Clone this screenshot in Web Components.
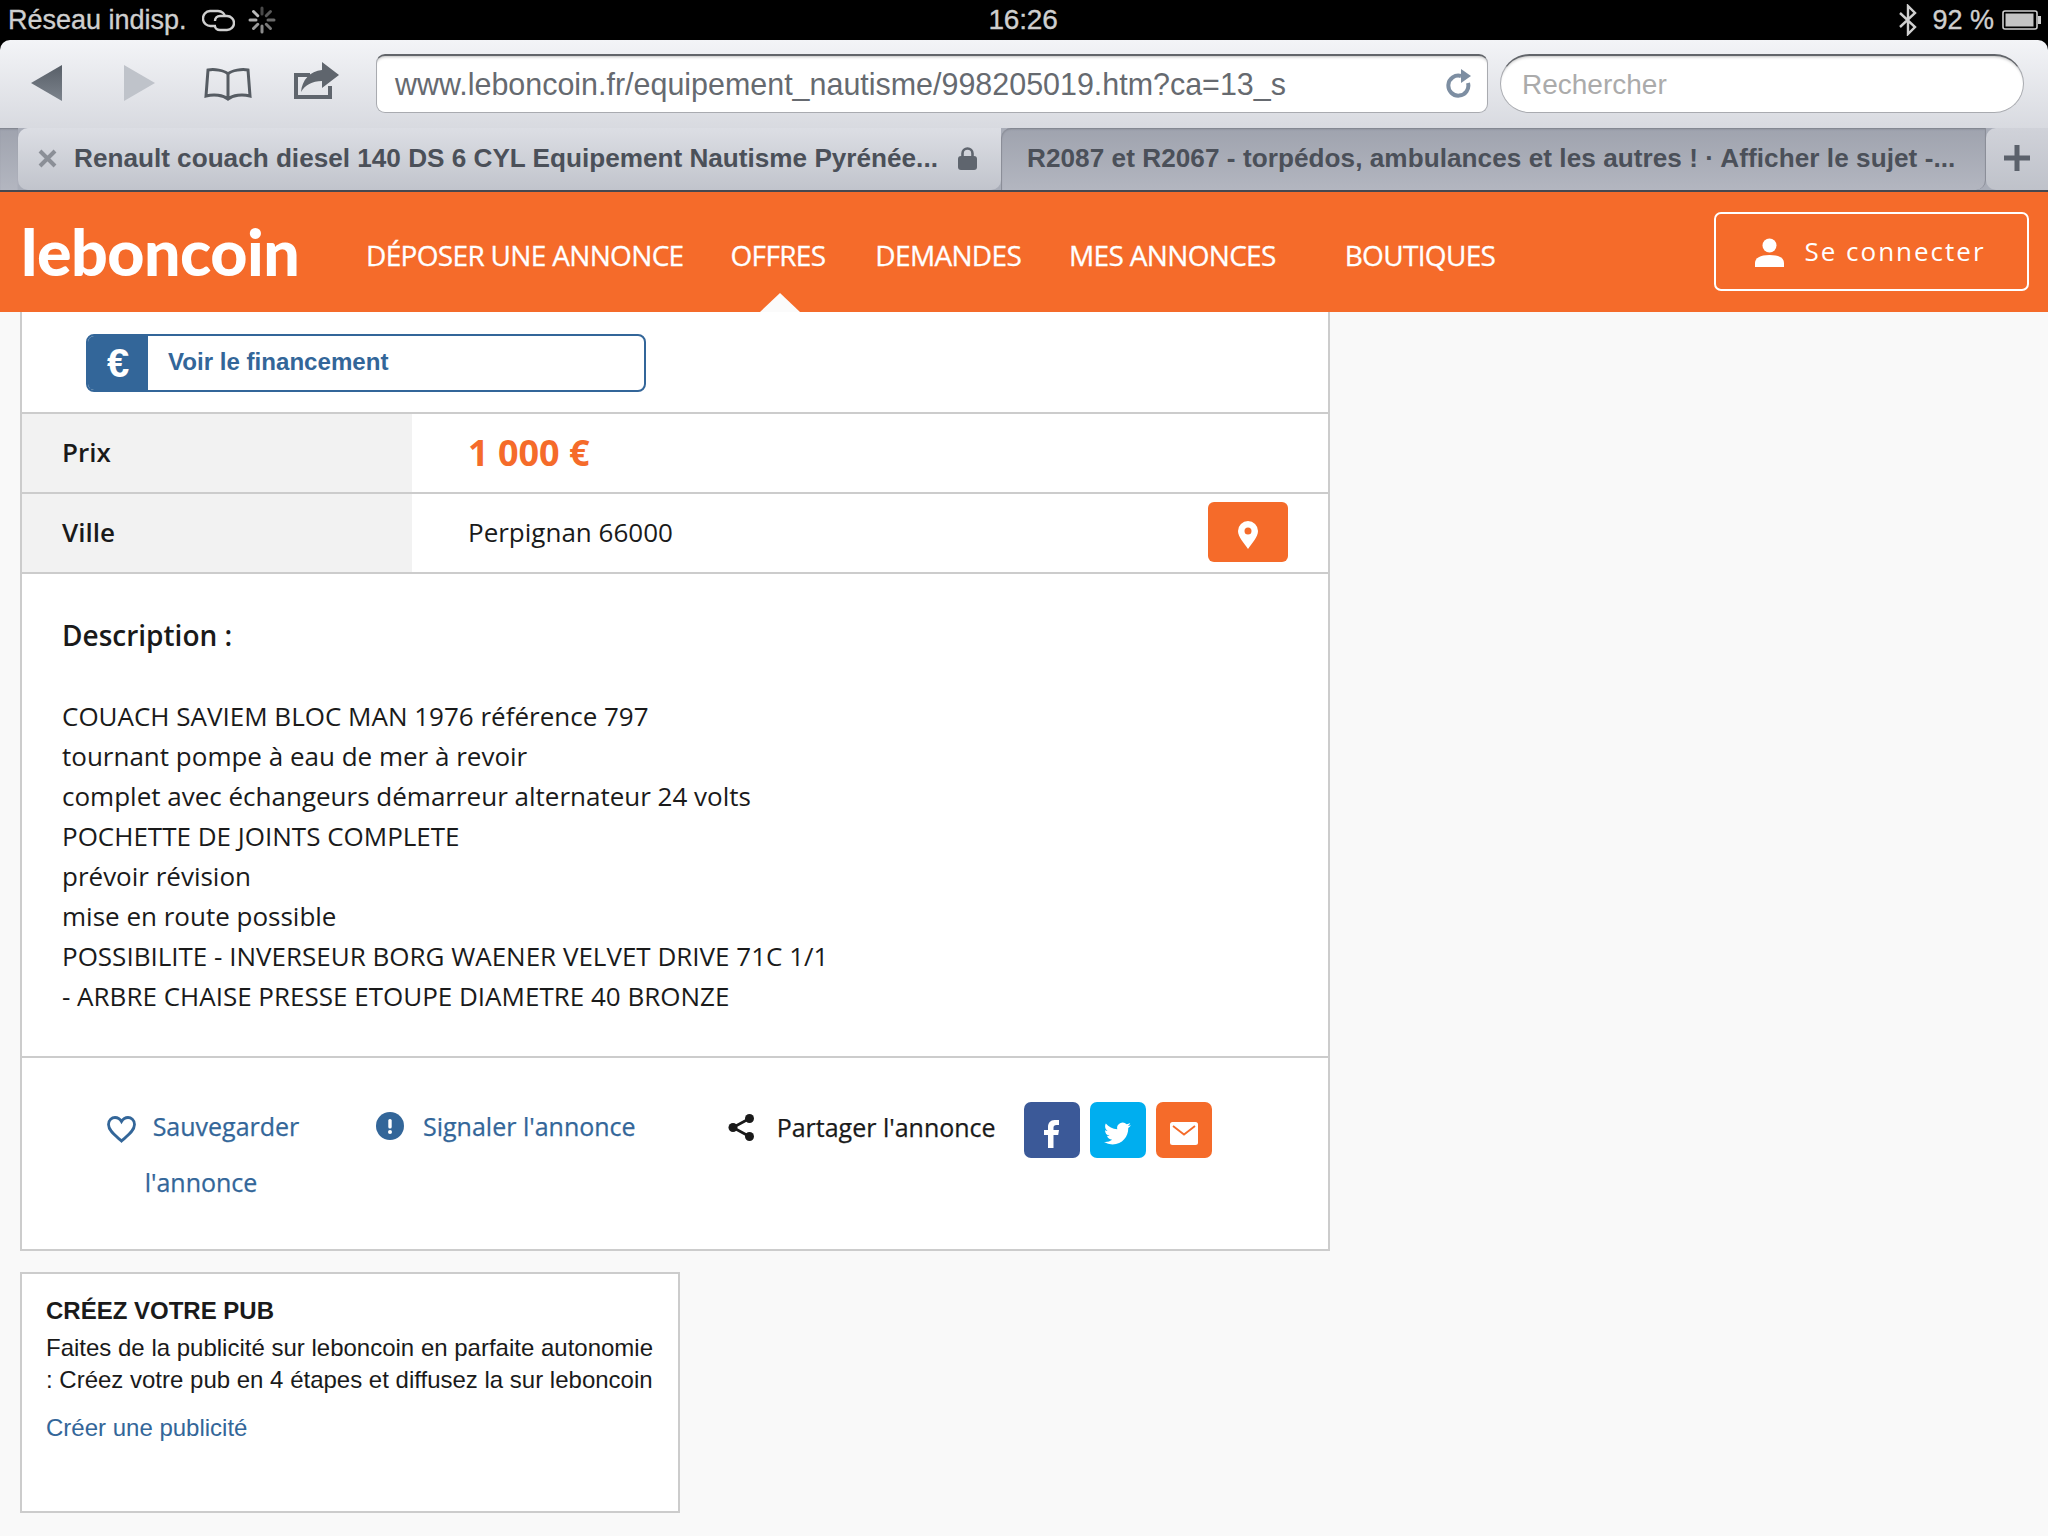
<!DOCTYPE html>
<html lang="fr">
<head>
<meta charset="utf-8">
<title>leboncoin</title>
<style>
  html, body { margin: 0; padding: 0; background: #f9f9f9; }
  body { width: 2048px; height: 1536px; overflow: hidden; font-family: "Open Sans", sans-serif; }
</style>
</head>
<body>
<ios-status-bar></ios-status-bar>
<safari-toolbar></safari-toolbar>
<safari-tabs></safari-tabs>
<lbc-header></lbc-header>
<ad-panel></ad-panel>
<pub-box></pub-box>

<script>
"use strict";

(function () {
  const ORANGE = "#f56b2a";

  class IosStatusBar extends HTMLElement {
    constructor() {
      super();
      const shadow = this.attachShadow({ mode: "open" });
      let rays = "";
      for (let i = 0; i < 8; i++) {
        rays += `<line x1="14" y1="2" x2="14" y2="8" transform="rotate(${i * 45} 14 14)" stroke-opacity="${0.35 + i * 0.08}"/>`;
      }
      shadow.innerHTML = `
        <style>
          :host {
            display: grid;
            grid-template-columns: 1fr auto 1fr;
            align-items: center;
            height: 40px;
            background: #000;
            color: #cfcfcf;
            font: 400 27px "Liberation Sans", sans-serif;
            -webkit-text-stroke: 0.35px #cfcfcf;
          }
          .left { display: flex; align-items: center; padding-left: 8px; }
          .link { margin-left: 15px; }
          .spin { margin-left: 13px; }
          .time { font-size: 28px; text-align: center; letter-spacing: -0.2px; margin-left: -2px; }
          .right { display: flex; align-items: center; justify-content: flex-end; padding-right: 6px; }
          .pct { margin: 0 8px 0 15px; }
        </style>
        <div class="left">
          <span>Réseau indisp.</span>
          <svg class="link" width="33" height="24" viewBox="0 0 33 24" fill="none" stroke="#cfcfcf" stroke-width="2.4">
            <path d="M14 18H9A7.500 7.500 0 0 1 8 3h8c4 0 7 3 7 6"/>
            <path d="M13 13c0-3 2-5 5-5h7a7 7 0 0 1 0 14h-7c-3 0-5-2-5-4"/>
          </svg>
          <svg class="spin" width="28" height="28" viewBox="0 0 28 28" stroke="#cfcfcf" stroke-width="3" stroke-linecap="round">${rays}</svg>
        </div>
        <div class="time">16:26</div>
        <div class="right">
          <svg width="18" height="32" viewBox="0 0 18 32" fill="none" stroke="#cfcfcf" stroke-width="2.4">
            <path d="M1 9l15 14-7 7V2l7 7L1 23"/>
          </svg>
          <span class="pct">92 %</span>
          <svg width="40" height="20" viewBox="0 0 40 20">
            <rect x="1" y="1" width="34" height="18" rx="2" fill="none" stroke="#cfcfcf" stroke-width="1.6"/>
            <rect x="3.5" y="3.5" width="28" height="13" fill="#c4c4c4"/>
            <rect x="36" y="6" width="3" height="8" fill="#cfcfcf"/>
          </svg>
        </div>
      `;
    }
  }

  class SafariToolbar extends HTMLElement {
    constructor() {
      super();
      const shadow = this.attachShadow({ mode: "open" });
      shadow.innerHTML = `
        <style>
          :host {
            display: flex;
            align-items: center;
            height: 88px;
            background: #000;
            font-family: "Liberation Sans", sans-serif;
          }
          .bar {
            flex: 1;
            height: 88px;
            display: flex;
            box-sizing: border-box;
            padding: 14px 23px 0 0;
            border-radius: 10px 10px 0 0;
            background: linear-gradient(#f3f4f7, #d8dae0);
          }
          .btns { display: flex; align-items: flex-start; width: 376px; flex: none; }
          .back { margin: 11px 0 0 31px; }
          .fwd { margin: 11px 0 0 62px; }
          .book { margin: 14px 0 0 49px; }
          .share { margin: 8px 0 0 40px; }
          .url, .search {
            height: 59px;
            box-sizing: border-box;
            background: #fff;
            border: 1px solid #a9abb0;
            border-top: 2px solid #62656a;
            box-shadow: inset 0 3px 3px -2px rgba(0,0,0,.25);
            display: flex;
            align-items: center;
          }
          .url {
            width: 1112px;
            border-radius: 9px;
            padding: 0 13px 0 18px;
            font-size: 30.45px;
            color: #666a70;
            justify-content: space-between;
          }
          .search {
            width: 524px;
            margin-left: 12px;
            border-radius: 30px;
            padding: 2px 0 0 21px;
            font-size: 28px;
            color: #ababab;
          }
        </style>
        <div class="bar">
          <div class="btns">
            <svg class="back" width="31" height="36" viewBox="0 0 31 36"><defs><linearGradient id="g1" x1="0" y1="0" x2="0" y2="1"><stop offset="0" stop-color="#585f68"/><stop offset="1" stop-color="#7c838c"/></linearGradient></defs><path d="M0 18L31 0v36z" fill="url(#g1)"/></svg>
            <svg class="fwd" width="31" height="36" viewBox="0 0 31 36"><path d="M31 18L0 0v36z" fill="#bfc3ca"/></svg>
            <svg class="book" width="48" height="33" viewBox="0 0 48 33" fill="none" stroke="#565c63" stroke-width="3">
              <path d="M24 6C20 2 10 1 4 2L2 28c8-2 17-1 22 3 5-4 14-5 22-3L44 2c-6-1-16 0-20 4zM24 6v25"/>
            </svg>
            <svg class="share" width="47" height="37" viewBox="0 0 47 37">
              <path d="M2 11h16v4H6v18h30v-9h4v13H2z" fill="#5f656d"/>
              <path d="M30 0l17 13-17 13v-7C20 19 13 23 9 30c1-12 9-21 21-22z" fill="#5f656d"/>
            </svg>
          </div>
          <div class="url">
            <span>www.leboncoin.fr/equipement_nautisme/998205019.htm?ca=13_s</span>
            <svg width="28" height="31" viewBox="0 0 28 31" fill="none">
              <path d="M22 14a10 10 0 1 1-7-7" stroke="#7d8ea2" stroke-width="4"/>
              <path d="M15 0l10 7-10 7z" fill="#7d8ea2"/>
            </svg>
          </div>
          <div class="search">Rechercher</div>
        </div>
      `;
    }
  }

  class SafariTab extends HTMLElement {
    constructor() {
      super();
      const shadow = this.attachShadow({ mode: "open" });
      shadow.innerHTML = `
        <style>
          :host {
            display: flex;
            align-items: center;
            box-sizing: border-box;
            height: 62px;
            font: 700 26.15px "Liberation Sans", sans-serif;
            color: #4b5059;
            white-space: nowrap;
            background: linear-gradient(#9fa3ae, #b3b6c0);
            box-shadow: inset 0 2px 2px -1px #7b7e88;
            padding-bottom: 2px;
          }
          :host([active]) {
            background: linear-gradient(#dcdee4, #c1c4cc);
            box-shadow: none;
            border-radius: 10px 0 10px 10px;
          }
        </style>
        <slot></slot>
      `;
    }
  }

  class SafariTabs extends HTMLElement {
    constructor() {
      super();
      const shadow = this.attachShadow({ mode: "open" });
      shadow.innerHTML = `
        <style>
          :host {
            display: flex;
            height: 64px;
            box-sizing: border-box;
            border-bottom: 2px solid #45484f;
            background: #a9adb8;
          }
          .edge { width: 18px; }
          .first { width: 983px; padding-left: 20px; }
          .first svg.close { margin-right: 17px; flex: none; }
          .first span { flex: 1; }
          .first svg.lock { margin-right: 24px; flex: none; }
          .second {
            width: 985px;
            padding-left: 25px;
            letter-spacing: 0.05px;
            border-radius: 10px 0 10px 0;
            border-left: 1px solid #8b8e98;
            border-right: 1px solid #8b8e98;
          }
          .plus {
            flex: 1;
            display: flex;
            align-items: center;
            justify-content: center;
            background: linear-gradient(#d0d2d9, #bfc2ca);
            border-radius: 10px 0 0 10px;
            padding-bottom: 2px;
          }
        </style>
        <safari-tab class="edge"></safari-tab>
        <safari-tab class="first" active>
          <svg class="close" width="19" height="19" viewBox="0 0 19 19" stroke="#8b8f97" stroke-width="4"><path d="M2 2l15 15M17 2L2 17"/></svg>
          <span>Renault couach diesel 140 DS 6 CYL Equipement Nautisme Pyrénée...</span>
          <svg class="lock" width="19" height="23" viewBox="0 0 19 23"><path d="M4.500 10V6.500a5 5 0 0 1 10 0V10" fill="none" stroke="#5f656e" stroke-width="2.600"/><rect y="9" width="19" height="14" rx="3" fill="#5f656e"/></svg>
        </safari-tab>
        <safari-tab class="second">R2087 et R2067 - torpédos, ambulances et les autres ! · Afficher le sujet -...</safari-tab>
        <div class="plus">
          <svg width="26" height="26" viewBox="0 0 26 26"><path d="M10.500 0h5v10.500H26v5H15.500V26h-5V15.500H0v-5h10.500z" fill="#5b616b"/></svg>
        </div>
      `;
    }
  }

  class LbcHeader extends HTMLElement {
    constructor() {
      super();
      const shadow = this.attachShadow({ mode: "open" });
      shadow.innerHTML = `
        <style>
          :host {
            display: flex;
            align-items: center;
            position: relative;
            height: 120px;
            background: ${ORANGE};
            color: #fff;
            font-family: "Open Sans", sans-serif;
          }
          .logo {
            width: 345px;
            padding-left: 21px;
            box-sizing: border-box;
            font: 900 64.5px Lato, sans-serif;
            letter-spacing: -0.5px;
            line-height: 1;
            margin-top: -2px;
            flex: none;
          }
          nav { display: flex; font-size: 28px; letter-spacing: -0.67px; padding-top: 5px; flex: none; -webkit-text-stroke: 0.3px #fff; }
          nav a { display: block; white-space: nowrap; }
          nav a:nth-child(1) { margin-left: 21px; }
          nav a:nth-child(2) { margin-left: 47px; }
          nav a:nth-child(3) { margin-left: 50px; }
          nav a:nth-child(4) { margin-left: 48px; }
          nav a:nth-child(5) { margin-left: 69px; }
          .login {
            margin-left: auto;
            margin-right: 19px;
            margin-top: -2px;
            width: 315px;
            height: 79px;
            box-sizing: border-box;
            border: 2px solid #fff;
            border-radius: 7px;
            display: flex;
            align-items: center;
            justify-content: center;
            gap: 20px;
            font-size: 26px;
            letter-spacing: 2px;
            padding-right: 2px;
          }
          .login svg { margin-top: 2px; }
          .tip {
            position: absolute;
            left: 760px;
            bottom: 0;
            width: 0;
            height: 0;
            border-left: 20px solid transparent;
            border-right: 20px solid transparent;
            border-bottom: 19px solid #fbfbfb;
          }
        </style>
        <div class="logo">leboncoin</div>
        <nav>
          <a>DÉPOSER UNE ANNONCE</a>
          <a>OFFRES</a>
          <a>DEMANDES</a>
          <a>MES ANNONCES</a>
          <a>BOUTIQUES</a>
        </nav>
        <div class="login">
          <svg width="29" height="29" viewBox="0 0 29 29" fill="#fff"><circle cx="14.500" cy="7.500" r="7"/><path d="M0 29v-4c0-5 5-8 14.500-8S29 20 29 25v4z"/></svg>
          <span>Se connecter</span>
        </div>
        <div class="tip"></div>
      `;
    }
  }

  class InfoRow extends HTMLElement {
    constructor() {
      super();
      const shadow = this.attachShadow({ mode: "open" });
      shadow.innerHTML = `
        <style>
          :host {
            display: flex;
            height: 78px;
            border-top: 2px solid #ccc;
            font-size: 26px;
            color: #1a1a1a;
          }
          .label {
            width: 390px;
            flex: none;
            box-sizing: border-box;
            padding: 0 0 3px 40px;
            background: #f2f2f2;
            font-weight: 600;
            display: flex;
            align-items: center;
          }
          .value {
            flex: 1;
            padding: 0 40px 3px 56px;
            display: flex;
            align-items: center;
            justify-content: space-between;
          }
        </style>
        <div class="label"><slot name="label"></slot></div>
        <div class="value"><slot></slot></div>
      `;
    }
  }

  class AdActions extends HTMLElement {
    constructor() {
      super();
      const shadow = this.attachShadow({ mode: "open" });
      shadow.innerHTML = `
        <style>
          :host {
            display: flex;
            align-items: flex-start;
            box-sizing: border-box;
            height: 193px;
            border-top: 2px solid #ccc;
            font-size: 25px;
            -webkit-text-stroke: 0.25px currentColor;
            color: #336699;
          }
          .save {
            width: 240px;
            margin: 40px 0 0 59px;
            text-align: center;
            line-height: 56px;
          }
          .save svg { vertical-align: -7px; margin: 0 17px 0 4px; }
          .report { display: flex; align-items: center; gap: 19px; margin: 40px 0 0 55px; height: 56px; white-space: nowrap; }
          .share { display: flex; align-items: center; gap: 23px; margin: 41px 0 0 92px; height: 56px; color: #1a1a1a; white-space: nowrap; }
          .social { display: flex; gap: 10px; margin: 44px 0 0 28px; }
          .social div { width: 56px; height: 56px; border-radius: 7px; display: flex; align-items: center; justify-content: center; padding-top: 7px; box-sizing: border-box; }
        </style>
        <div class="save">
          <svg width="29" height="27" viewBox="0 0 29 27" fill="none" stroke="#336699" stroke-width="2.800"><path d="M14.500 25C9 20 1.500 15 1.500 8.500 1.500 4 5 1.500 8 1.500c3 0 5 1.500 6.500 4 1.500-2.500 3.500-4 6.500-4 3 0 6.500 2.500 6.500 7C27.500 15 20 20 14.500 25z"/></svg>Sauvegarder l'annonce
        </div>
        <div class="report">
          <svg width="28" height="28" viewBox="0 0 28 28"><circle cx="14" cy="14" r="14" fill="#336699"/><rect x="12.300" y="7" width="3.400" height="9.500" rx="1.500" fill="#fff"/><circle cx="14" cy="20" r="2" fill="#fff"/></svg>
          <span>Signaler l'annonce</span>
        </div>
        <div class="share">
          <svg width="26" height="27" viewBox="0 0 26 27" fill="#1a1a1a"><circle cx="5" cy="13.500" r="4.500"/><circle cx="21.500" cy="4.500" r="4.500"/><circle cx="21.500" cy="22.500" r="4.500"/><path d="M5 13.500L21.500 4.500M5 13.500l16.500 9" stroke="#1a1a1a" stroke-width="2.600"/></svg>
          <span>Partager l'annonce</span>
        </div>
        <div class="social">
          <div style="background:#3b5998">
            <svg width="15" height="28" viewBox="0 0 15 28"><path d="M4 28V15H0v-5h4V7c0-4 2.500-7 6.500-7H15v5h-2.500C10.500 5 9.500 6 9.500 7.500V10H15l-.8 5H9.500v13z" fill="#fff"/></svg>
          </div>
          <div style="background:#00aeef">
            <svg width="27" height="27" viewBox="0 0 24 24"><path d="M23.950 4.570a10 10 0 0 1-2.820.77 4.960 4.960 0 0 0 2.160-2.720c-.950.550-2 .960-3.130 1.180a4.920 4.920 0 0 0-8.380 4.480C7.690 8.090 4.070 6.130 1.640 3.160a4.820 4.820 0 0 0-.670 2.480c0 1.710.870 3.200 2.190 4.100a4.900 4.900 0 0 1-2.230-.620v.060a4.920 4.920 0 0 0 3.950 4.830 4.900 4.900 0 0 1-2.210.080 4.930 4.930 0 0 0 4.600 3.420A9.870 9.870 0 0 1 0 19.540a13.940 13.940 0 0 0 7.550 2.210c9.060 0 14-7.500 14-13.980 0-.210 0-.420-.020-.630a9.940 9.940 0 0 0 2.420-2.570z" fill="#fff"/></svg>
          </div>
          <div style="background:${ORANGE}">
            <svg width="28" height="23" viewBox="0 0 28 23"><rect width="28" height="23" rx="2.500" fill="#fff"/><path d="M3 4l11 8.500L25 4" fill="none" stroke="${ORANGE}" stroke-width="1.800"/></svg>
          </div>
        </div>
      `;
    }
  }

  class AdPanel extends HTMLElement {
    constructor() {
      super();
      const shadow = this.attachShadow({ mode: "open" });
      shadow.innerHTML = `
        <style>
          :host {
            display: block;
            box-sizing: border-box;
            width: 1310px;
            margin-left: 20px;
            background: #fff;
            border: 2px solid #ccc;
            border-top: 0;
            font-family: "Open Sans", sans-serif;
            color: #1a1a1a;
          }
          .finance-wrap { height: 100px; padding: 22px 0 0 64px; box-sizing: border-box; }
          .finance {
            display: flex;
            align-items: center;
            width: 560px;
            height: 58px;
            box-sizing: border-box;
            border: 2px solid #336699;
            border-radius: 8px;
            overflow: hidden;
            font: 700 24.1px "Liberation Sans", sans-serif;
            color: #336699;
            padding-bottom: 3px;
          }
          .finance b {
            width: 60px;
            align-self: stretch;
            background: #336699;
            color: #fff;
            font: 700 40px "Liberation Sans", sans-serif;
            display: flex;
            align-items: center;
            justify-content: center;
            margin: 0 20px -3px 0;
          }
          .price { font-size: 36px; font-weight: 700; color: ${ORANGE}; padding-top: 2px; }
          .map {
            width: 80px;
            height: 60px;
            border-radius: 6px;
            background: ${ORANGE};
            display: flex;
            align-items: center;
            justify-content: center;
            padding-top: 6px;
            box-sizing: border-box;
          }
          .desc {
            border-top: 2px solid #ccc;
            height: 484px;
            box-sizing: border-box;
            padding: 41px 40px 0;
            font-size: 26px;
            line-height: 40px;
          }
          h2 { margin: 0 0 41px; font-size: 28px; font-weight: 600; line-height: 40px; }
        </style>
        <div class="finance-wrap">
          <div class="finance"><b>€</b>Voir le financement</div>
        </div>
        <info-row><span slot="label">Prix</span><span class="price">1 000 €</span></info-row>
        <info-row><span slot="label">Ville</span><span>Perpignan 66000</span>
          <span class="map"><svg width="20" height="28" viewBox="0 0 20 28"><path fill-rule="evenodd" d="M10 0a10 10 0 0 1 10 10c0 6-6 12-10 18C6 22 0 16 0 10A10 10 0 0 1 10 0zm0 6.500a3.500 3.500 0 1 0 0 7 3.500 3.500 0 0 0 0-7z" fill="#fff"/></svg></span>
        </info-row>
        <div class="desc">
          <h2>Description :</h2>
          <div>COUACH SAVIEM BLOC MAN 1976 référence 797</div>
          <div>tournant pompe à eau de mer à revoir</div>
          <div>complet avec échangeurs démarreur alternateur 24 volts</div>
          <div>POCHETTE DE JOINTS COMPLETE</div>
          <div>prévoir révision</div>
          <div>mise en route possible</div>
          <div>POSSIBILITE - INVERSEUR BORG WAENER VELVET DRIVE 71C 1/1</div>
          <div>- ARBRE CHAISE PRESSE ETOUPE DIAMETRE 40 BRONZE</div>
        </div>
        <ad-actions></ad-actions>
      `;
    }
  }

  class PubBox extends HTMLElement {
    constructor() {
      super();
      const shadow = this.attachShadow({ mode: "open" });
      shadow.innerHTML = `
        <style>
          :host {
            display: block;
            box-sizing: border-box;
            width: 660px;
            height: 241px;
            margin: 21px 0 0 20px;
            padding: 22px 24px 0;
            background: #fff;
            border: 2px solid #ccc;
            font: 400 24px/32px "Liberation Sans", sans-serif;
            color: #1a1a1a;
          }
          h3 { margin: 0 0 6px; font-size: 24px; font-weight: 700; line-height: 30px; }
          p { margin: 0; white-space: nowrap; }
          a { display: block; margin-top: 16px; color: #336699; }
        </style>
        <h3>CRÉEZ VOTRE PUB</h3>
        <p>Faites de la publicité sur leboncoin en parfaite autonomie</p>
        <p>: Créez votre pub en 4 étapes et diffusez la sur leboncoin</p>
        <a>Créer une publicité</a>
      `;
    }
  }

  customElements.define("ios-status-bar", IosStatusBar);
  customElements.define("safari-toolbar", SafariToolbar);
  customElements.define("safari-tab", SafariTab);
  customElements.define("safari-tabs", SafariTabs);
  customElements.define("lbc-header", LbcHeader);
  customElements.define("info-row", InfoRow);
  customElements.define("ad-actions", AdActions);
  customElements.define("ad-panel", AdPanel);
  customElements.define("pub-box", PubBox);
})();
</script>
</body>
</html>
